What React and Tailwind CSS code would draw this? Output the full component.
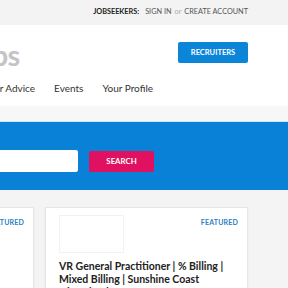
import React from 'react';

export default function App() {
  return (
    <div className="w-[288px] h-[288px] overflow-hidden bg-[#f4f4f4] font-['Lato',sans-serif] text-[#333]">
      {/* Top utility bar */}
      <div className="h-[25px] bg-[#f3f3f3] flex items-center justify-end pr-[40px] text-[7.3px] uppercase">
        <span className="font-bold text-[#222]">Jobseekers:</span>
        <span className="ml-[6px] text-[#555]">Sign in</span>
        <span className="mx-[3px] text-[#aaa] normal-case">or</span>
        <span className="text-[#555]">Create account</span>
      </div>

      {/* Header with logo and recruiters */}
      <div className="bg-white">
        <div className="h-[56px] flex items-center justify-between pr-[40px]">
          <span className="ml-[-36px] mt-[2px] text-[29px] font-bold text-[#c4c4c4] leading-none tracking-[-0.5px]">Jobs</span>
          <button className="w-[70px] h-[21px] mb-[1px] rounded-[2px] bg-[#0a85d8] text-white text-[7.5px] font-bold uppercase">
            Recruiters
          </button>
        </div>
        <nav className="h-[25px] flex items-start gap-[19px] ml-[-26px] text-[10px] text-[#333]">
          <span>Career Advice</span>
          <span>Events</span>
          <span>Your Profile</span>
        </nav>
      </div>

      {/* Gray strip under nav */}
      <div className="h-[16px] bg-[#f7f7f7] border-b border-[#cfe6f6]"></div>

      {/* Search hero */}
      <div className="h-[68px] bg-[#0881d6] flex items-start gap-[11px] pt-[28px]">
        <div className="w-[78px] h-[22px] bg-white rounded-r-[2px]"></div>
        <button className="w-[65px] h-[21px] mt-[1px] rounded-[2px] bg-[#df1160] text-white text-[7.8px] font-bold uppercase">
          Search
        </button>
      </div>

      {/* Job cards */}
      <div className="flex gap-[11px] pt-[17px] ml-[-169px]">
        <div className="w-[203px] h-[120px] shrink-0 bg-white border border-[#e6e6e6] shadow-[0_1px_2px_rgba(0,0,0,0.06)] flex justify-end pr-[9px] pt-[9px]">
          <span className="text-[7px] font-bold uppercase text-[#2a7fc4] tracking-[0.2px]">Featured</span>
        </div>
        <div className="w-[203px] h-[120px] shrink-0 bg-white border border-[#e6e6e6] shadow-[0_1px_2px_rgba(0,0,0,0.06)] px-[13px] pt-[7px]">
          <div className="flex justify-between items-start">
            <div className="w-[65px] h-[38px] border border-[#f2f2f2] bg-white"></div>
            <span className="mt-[2px] mr-[-4px] text-[7px] font-bold uppercase text-[#2a7fc4] tracking-[0.2px]">Featured</span>
          </div>
          <div className="mt-[7px] text-[10.5px] font-bold text-[#222] leading-[13px]">
            VR General Practitioner | % Billing | Mixed Billing | Sunshine Coast Hinterland
          </div>
        </div>
      </div>
    </div>
  );
}
